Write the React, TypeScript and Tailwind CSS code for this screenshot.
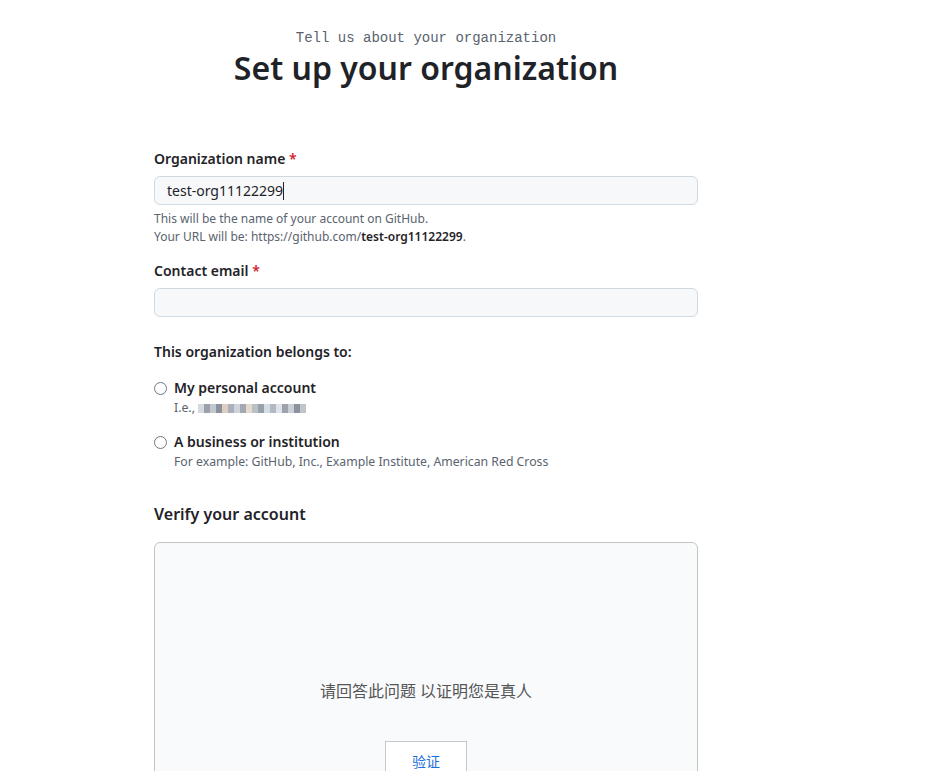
import React from "react";

const blur = ["#d6d9de","#9aa1ac","#c3c8cf","#8a929e","#dccfc2","#aab0b9","#cfd4da","#a3a9b2","#e4d9cc","#bac0c8","#98a0aa","#d2dee7","#b3b9c1","#dfe3e7","#9ca3ad","#ccd0d5","#8b939e","#c0c5cc"];

export default function App() {
  return (
    <div className="min-h-[771px] bg-white" style={{ fontFamily: '"Noto Sans", "Noto Sans CJK SC", sans-serif' }}>
      <div className="ml-[154px] w-[544px] pt-[29px]">
        <div className="text-center text-[14px] leading-[18px] text-[#59636e]" style={{ fontFamily: '"Liberation Mono", monospace' }}>
          Tell us about your organization
        </div>
        <h1 className="text-center text-[32px] leading-[40px] font-semibold text-[#1f2328] mt-[1px]">
          Set up your organization
        </h1>

        <div className="mt-[61px]">
          <label className="block text-[14px] leading-[20px] font-semibold text-[#1f2328]">
            Organization name <span className="text-[#cf222e]">*</span>
          </label>
          <div className="mt-[7px] h-[29px] rounded-[6px] border border-[#d1d9e0] bg-[#f6f8fa] flex items-center px-[12px] text-[14px] text-[#1f2328]">
            <span>test-org11122299</span>
            <span className="inline-block w-[1px] h-[18px] bg-[#1f2328]"></span>
          </div>
          <div className="mt-[5px] text-[12px] leading-[18px] text-[#59636e]">
            <div>This will be the name of your account on GitHub.</div>
            <div>
              Your URL will be: https://github.com/<span className="font-semibold text-[#1f2328]">test-org11122299</span>.
            </div>
          </div>
        </div>

        <div className="mt-[15px]">
          <label className="block text-[14px] leading-[20px] font-semibold text-[#1f2328]">
            Contact email <span className="text-[#cf222e]">*</span>
          </label>
          <div className="mt-[7px] h-[29px] rounded-[6px] border border-[#d1d9e0] bg-[#f6f8fa]"></div>
        </div>

        <div className="mt-[25px] text-[14px] leading-[20px] font-semibold text-[#1f2328]">
          This organization belongs to:
        </div>

        <div className="mt-[16px] flex gap-[7px]">
          <div className="mt-[4px] w-[13px] h-[13px] rounded-full border border-[#6e7781] bg-white shrink-0"></div>
          <div>
            <div className="text-[14px] leading-[20px] font-semibold text-[#1f2328]">My personal account</div>
            <div className="mt-[1px] text-[12.25px] leading-[18px] text-[#59636e] flex items-center">
              <span>I.e.,</span>
              <span className="ml-[3px] flex h-[9px]">
                {blur.map((c, i) => (
                  <span key={i} className="block w-[6px] h-[9px]" style={{ backgroundColor: c }}></span>
                ))}
              </span>
            </div>
          </div>
        </div>

        <div className="mt-[15px] flex gap-[7px]">
          <div className="mt-[4px] w-[13px] h-[13px] rounded-full border border-[#6e7781] bg-white shrink-0"></div>
          <div>
            <div className="text-[14px] leading-[20px] font-semibold text-[#1f2328]">A business or institution</div>
            <div className="mt-[1px] text-[12.25px] leading-[18px] text-[#59636e]">
              For example: GitHub, Inc., Example Institute, American Red Cross
            </div>
          </div>
        </div>

        <div className="mt-[31px] text-[16px] leading-[24px] font-semibold text-[#1f2328]">
          Verify your account
        </div>

        <div className="mt-[16px] h-[260px] rounded-t-[6px] border border-[#c4c4c4] bg-[#f9fafb] flex flex-col items-center">
          <div className="mt-[136px] text-[16px] leading-[24px] text-[#555555]">
            请回答此问题 以证明您是真人
          </div>
          <div className="mt-[38px] w-[82px] h-[40px] border border-[#c8c8c8] bg-white flex items-center justify-center text-[14px] text-[#1a6fd8]">
            验证
          </div>
        </div>
      </div>
    </div>
  );
}
